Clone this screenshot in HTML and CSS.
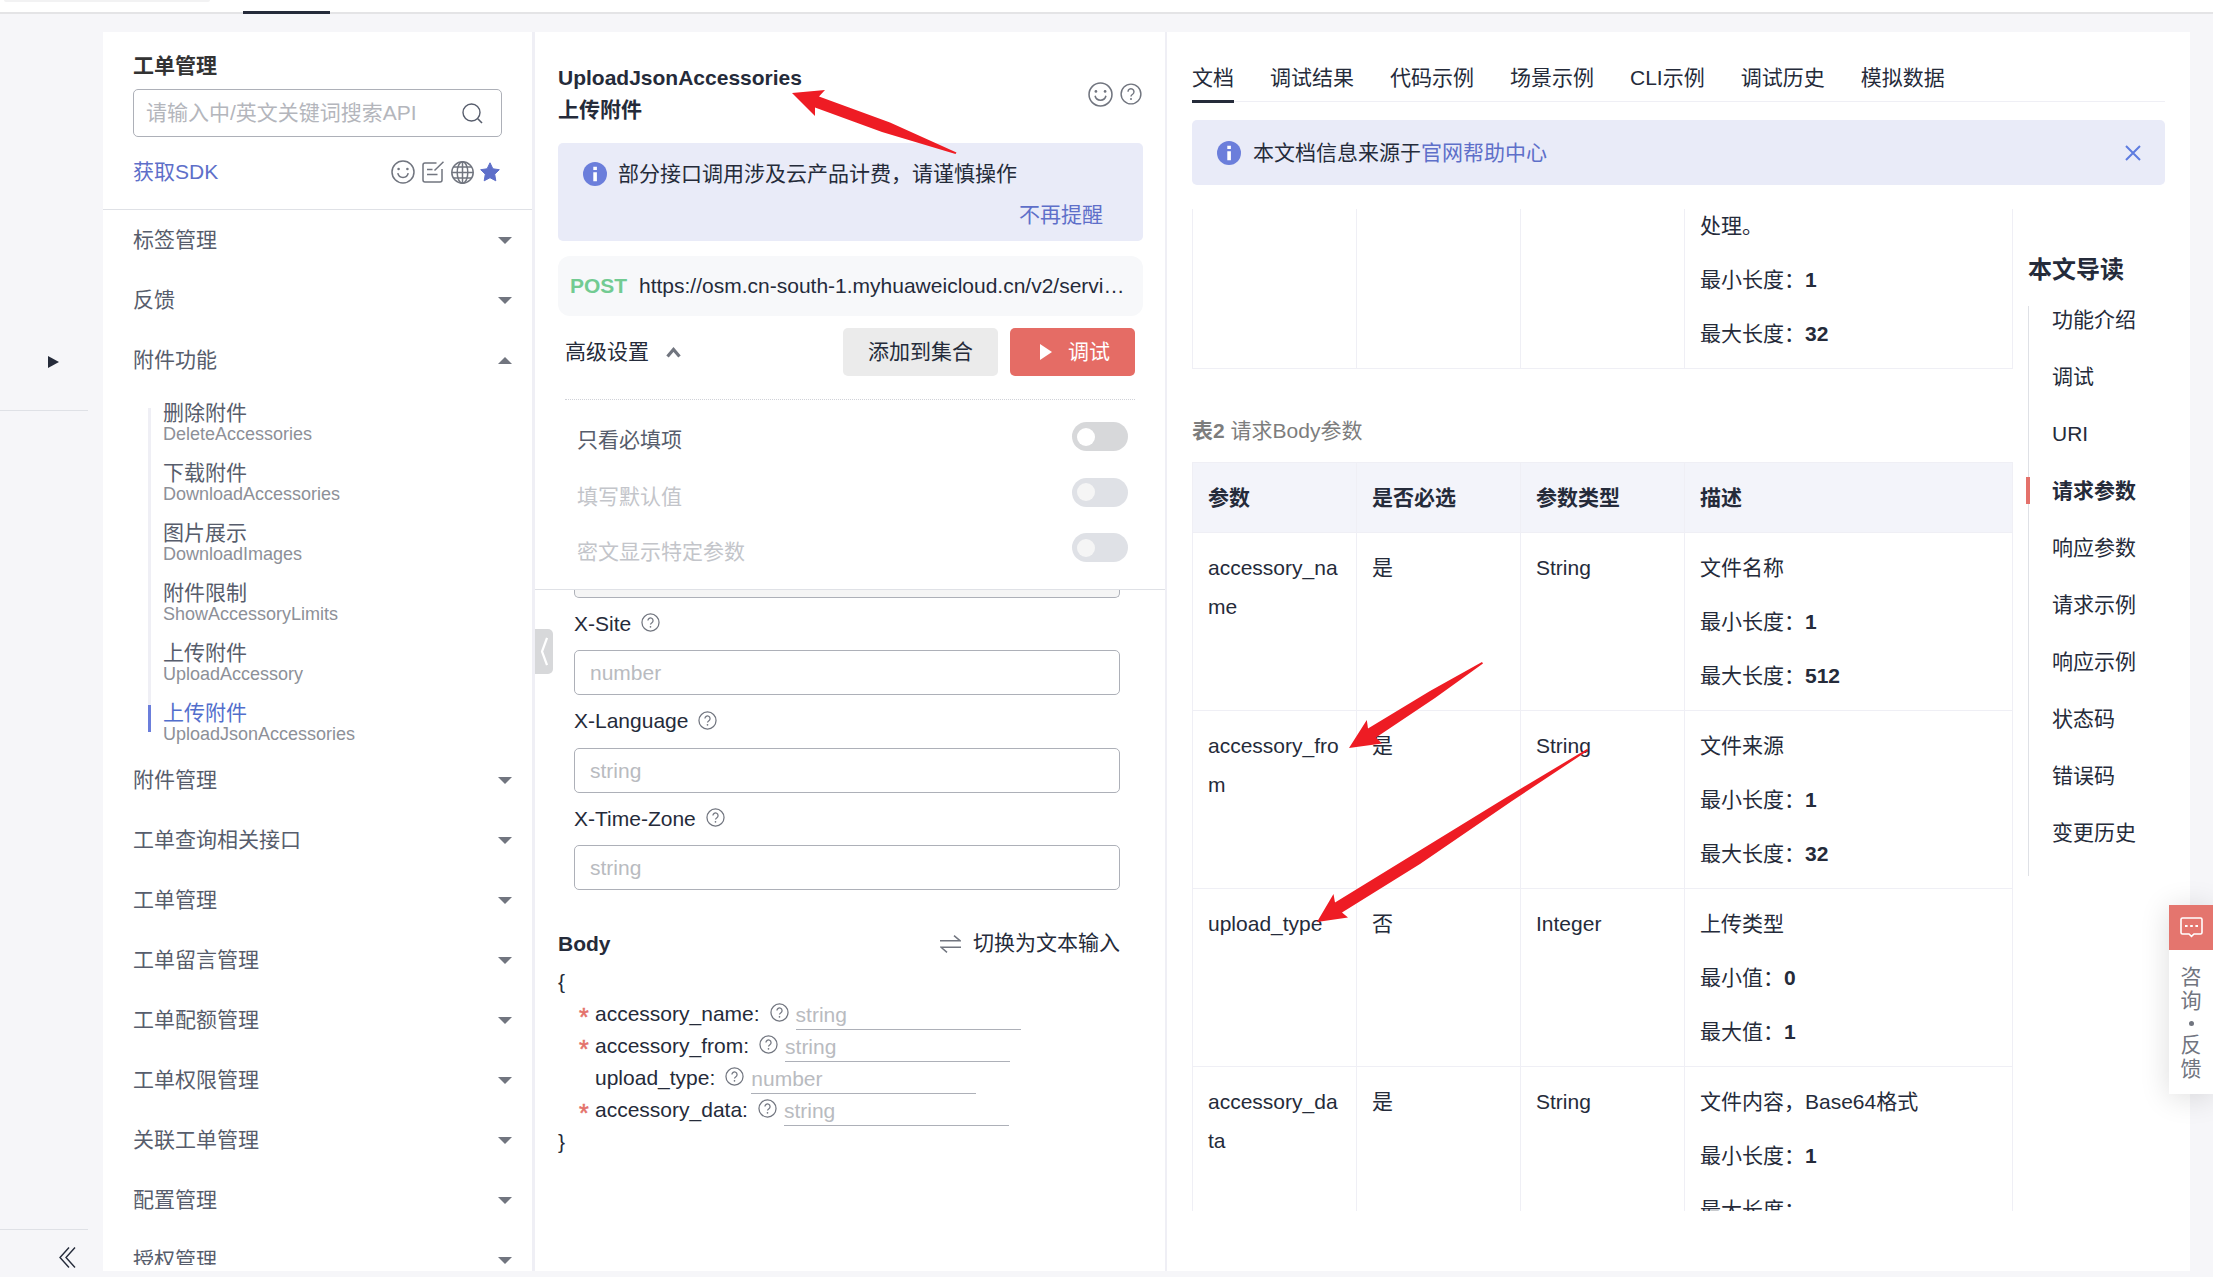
FILE: index.html
```html
<!DOCTYPE html>
<html lang="zh-CN">
<head>
    <meta charset="UTF-8">
    <title>API Explorer - UploadJsonAccessories</title>
    <link rel="stylesheet" href="styles.css">
</head>
<body>
    <svg class="sprite" width="0" height="0">
        <symbol id="help" viewBox="0 0 20 20">
            <circle cx="10" cy="10" r="9" fill="none" stroke="currentColor" stroke-width="1.3"/>
            <path d="M7.3 8 a2.7 2.7 0 1 1 4.2 2.2 q-1.5 1 -1.5 2" fill="none" stroke="currentColor" stroke-width="1.3"/>
            <circle cx="10" cy="14.6" r="0.9" fill="currentColor"/>
        </symbol>
        <symbol id="smile" viewBox="0 0 24 24">
            <circle cx="12" cy="12" r="11" fill="none" stroke="currentColor" stroke-width="1.5"/>
            <circle cx="7.6" cy="9" r="1.3" fill="currentColor"/>
            <circle cx="16.4" cy="9" r="1.3" fill="currentColor"/>
            <path d="M6.8 13.2 a5.3 5.3 0 0 0 10.4 0" fill="none" stroke="currentColor" stroke-width="1.5"/>
        </symbol>
        <symbol id="info" viewBox="0 0 24 24">
            <circle cx="12" cy="12" r="12" fill="#6b7edb"/>
            <path d="M10.3 4.8h3.6v3.2h-3.6z M10.3 10.2h3.6v9h-3.6z" fill="#fff"/>
        </symbol>
    </svg>

    <header class="topbar">
        <div class="top-search"></div>
        <div class="top-active"></div>
    </header>

    <div class="page">
        <aside class="rail">
            <div class="rail-top"><i class="rail-arrow"></i></div>
            <div class="rail-bottom">
                <svg width="17" height="21" viewBox="0 0 17 21"><path d="M10 .5 L1 10.5 L10 20.5 M16 .5 L7 10.5 L16 20.5" fill="none" stroke="#252b3a" stroke-width="1.4"/></svg>
            </div>
        </aside>

        <nav class="sidebar">
            <div class="sidebar-head">
                <h2>工单管理</h2>
                <div class="search">
                    <span>请输入中/英文关键词搜索API</span>
                    <svg width="21" height="21" viewBox="0 0 21 21"><circle cx="9.5" cy="9.5" r="8.5" fill="none" stroke="#575d6c" stroke-width="1.4"/><path d="M15.8 15.8 L20 20" stroke="#575d6c" stroke-width="1.6"/></svg>
                </div>
                <div class="sdk">
                    <a>获取SDK</a>
                    <div class="sdk-icons">
                        <svg width="24" height="24"><use href="#smile"/></svg>
                        <svg width="22" height="22" viewBox="0 0 22 22" fill="none" stroke="currentColor" stroke-width="1.5"><path d="M14.5 2 H3 a2 2 0 0 0 -2 2 V19 a2 2 0 0 0 2 2 H18 a2 2 0 0 0 2 -2 V8"/><path d="M5 8.5 H10.5 M5 13.5 H15.5 M12.5 9.5 L21.5 .8"/></svg>
                        <svg width="23" height="23" viewBox="0 0 23 23" fill="none" stroke="currentColor" stroke-width="1.5"><circle cx="11.5" cy="11.5" r="10.7"/><ellipse cx="11.5" cy="11.5" rx="5.3" ry="10.7"/><path d="M11.5 .8 V22.2 M.8 11.5 H22.2 M2.5 6 H20.5 M2.5 17 H20.5"/></svg>
                        <svg width="20" height="20" viewBox="0 0 20 20"><path d="M10 .8 L12.9 6.8 L19.3 7.7 L14.7 12.2 L15.8 18.8 L10 15.7 L4.2 18.8 L5.3 12.2 L.7 7.7 L7.1 6.8 Z" fill="#5e6fc9" stroke="#5e6fc9" stroke-width="1" stroke-linejoin="round"/></svg>
                    </div>
                </div>
            </div>
            <div class="menu">
                <div class="group">标签管理<i class="caret"></i></div>
                <div class="group">反馈<i class="caret"></i></div>
                <div class="group">附件功能<i class="caret up"></i></div>
                <ul class="apis">
                    <li>删除附件<small>DeleteAccessories</small></li>
                    <li>下载附件<small>DownloadAccessories</small></li>
                    <li>图片展示<small>DownloadImages</small></li>
                    <li>附件限制<small>ShowAccessoryLimits</small></li>
                    <li>上传附件<small>UploadAccessory</small></li>
                    <li class="active">上传附件<small>UploadJsonAccessories</small></li>
                </ul>
                <div class="group">附件管理<i class="caret"></i></div>
                <div class="group">工单查询相关接口<i class="caret"></i></div>
                <div class="group">工单管理<i class="caret"></i></div>
                <div class="group">工单留言管理<i class="caret"></i></div>
                <div class="group">工单配额管理<i class="caret"></i></div>
                <div class="group">工单权限管理<i class="caret"></i></div>
                <div class="group">关联工单管理<i class="caret"></i></div>
                <div class="group">配置管理<i class="caret"></i></div>
                <div class="group">授权管理<i class="caret"></i></div>
            </div>
        </nav>

        <section class="debug">
            <div class="debug-head">
                <div class="title">
                    <h1>UploadJsonAccessories<br>上传附件</h1>
                    <div class="title-icons">
                        <svg width="25" height="25"><use href="#smile"/></svg>
                        <svg width="22" height="22"><use href="#help"/></svg>
                    </div>
                </div>
                <div class="notice">
                    <svg width="24" height="24"><use href="#info"/></svg>
                    <div class="notice-text">
                        <p>部分接口调用涉及云产品计费，请谨慎操作</p>
                        <a>不再提醒</a>
                    </div>
                </div>
                <div class="url"><b>POST</b><span>https://osm.cn-south-1.myhuaweicloud.cn/v2/servi…</span></div>
                <div class="actions">
                    <span class="advanced">高级设置</span>
                    <svg class="chevron" width="15" height="11" viewBox="0 0 15 11"><path d="M1.5 9.5 L7.5 2.5 L13.5 9.5" fill="none" stroke="#71757f" stroke-width="3.2"/></svg>
                    <button class="btn">添加到集合</button>
                    <button class="btn primary"><i class="play"></i>调试</button>
                </div>
                <div class="options">
                    <div class="option"><span>只看必填项</span><i class="toggle"></i></div>
                    <div class="option disabled"><span>填写默认值</span><i class="toggle"></i></div>
                    <div class="option disabled"><span>密文显示特定参数</span><i class="toggle"></i></div>
                </div>
            </div>
            <div class="debug-form">
                <div class="input cut"></div>
                <div class="field">
                    <label>X-Site<svg width="19" height="19"><use href="#help"/></svg></label>
                    <div class="input">number</div>
                </div>
                <div class="field">
                    <label>X-Language<svg width="19" height="19"><use href="#help"/></svg></label>
                    <div class="input">string</div>
                </div>
                <div class="field">
                    <label>X-Time-Zone<svg width="19" height="19"><use href="#help"/></svg></label>
                    <div class="input">string</div>
                </div>
                <div class="body-head">
                    <b>Body</b>
                    <svg width="21" height="18" viewBox="0 0 21 18" fill="none" stroke="#71757f" stroke-width="1.5"><path d="M0 5.7 H20 L14 .6 M21 12.2 H1 L7 17.4"/></svg>
                    <span>切换为文本输入</span>
                </div>
                <div class="json">
                    <div class="row">{</div>
                    <div class="row param"><em>*</em>accessory_name:<svg width="19" height="19"><use href="#help"/></svg><span>string</span></div>
                    <div class="row param"><em>*</em>accessory_from:<svg width="19" height="19"><use href="#help"/></svg><span>string</span></div>
                    <div class="row param"><em></em>upload_type:<svg width="19" height="19"><use href="#help"/></svg><span>number</span></div>
                    <div class="row param"><em>*</em>accessory_data:<svg width="19" height="19"><use href="#help"/></svg><span>string</span></div>
                    <div class="row">}</div>
                </div>
            </div>
            <div class="handle"><svg width="8" height="29" viewBox="0 0 8 29"><path d="M7 1 L2 14.5 L7 28" fill="none" stroke="#fff" stroke-width="2.2"/></svg></div>
        </section>

        <section class="doc">
            <div class="tabs">
                <span class="active">文档</span>
                <span>调试结果</span>
                <span>代码示例</span>
                <span>场景示例</span>
                <span>CLI示例</span>
                <span>调试历史</span>
                <span>模拟数据</span>
            </div>
            <div class="source">
                <svg width="24" height="24"><use href="#info"/></svg>
                <p>本文档信息来源于<a>官网帮助中心</a></p>
                <svg width="16" height="16" viewBox="0 0 16 16"><path d="M1 1 L15 15 M15 1 L1 15" stroke="#5e7ce0" stroke-width="2"/></svg>
            </div>
            <div class="doc-body">
                <div class="article">
                    <table class="first">
                        <tr>
                            <td></td><td></td><td></td>
                            <td><p>处理。</p><p>最小长度：<b>1</b></p><p>最大长度：<b>32</b></p></td>
                        </tr>
                    </table>
                    <div class="caption"><b>表2</b> 请求Body参数</div>
                    <table>
                        <tr><th>参数</th><th>是否必选</th><th>参数类型</th><th>描述</th></tr>
                        <tr>
                            <td>accessory_name</td><td>是</td><td>String</td>
                            <td><p>文件名称</p><p>最小长度：<b>1</b></p><p>最大长度：<b>512</b></p></td>
                        </tr>
                        <tr>
                            <td>accessory_from</td><td>是</td><td>String</td>
                            <td><p>文件来源</p><p>最小长度：<b>1</b></p><p>最大长度：<b>32</b></p></td>
                        </tr>
                        <tr>
                            <td>upload_type</td><td>否</td><td>Integer</td>
                            <td><p>上传类型</p><p>最小值：<b>0</b></p><p>最大值：<b>1</b></p></td>
                        </tr>
                        <tr>
                            <td>accessory_data</td><td>是</td><td>String</td>
                            <td><p>文件内容，Base64格式</p><p>最小长度：<b>1</b></p><p>最大长度：</p></td>
                        </tr>
                    </table>
                </div>
                <div class="toc">
                    <h3>本文导读</h3>
                    <ul>
                        <li>功能介绍</li>
                        <li>调试</li>
                        <li>URI</li>
                        <li class="active">请求参数</li>
                        <li>响应参数</li>
                        <li>请求示例</li>
                        <li>响应示例</li>
                        <li>状态码</li>
                        <li>错误码</li>
                        <li>变更历史</li>
                    </ul>
                </div>
            </div>
        </section>
    </div>

    <div class="feedback">
        <div class="feedback-icon">
            <svg width="23" height="21" viewBox="0 0 23 21"><path d="M2.5 1 H20.5 a1.5 1.5 0 0 1 1.5 1.5 V15.5 a1.5 1.5 0 0 1 -1.5 1.5 H14 L11.5 19.3 L9 17 H2.5 A1.5 1.5 0 0 1 1 15.5 V2.5 A1.5 1.5 0 0 1 2.5 1 Z" fill="none" stroke="#fff" stroke-width="1.6"/><path d="M5 8h2.6v2H5z M10.2 8h2.6v2h-2.6z M15.4 8H18v2h-2.6z" fill="#fff"/></svg>
        </div>
        <div class="feedback-text"><span>咨</span><span>询</span><i></i><span>反</span><span>馈</span></div>
    </div>

    <!-- annotation arrows -->
    <svg class="arrows" width="2213" height="1277" viewBox="0 0 2213 1277" fill="#ee1c24">
        <path d="M792 93 L825 90 L819 96.5 L890 122.5 L956.5 152.5 L955.5 154 L882 132 L815 107.5 L815 116 Z"/>
        <path d="M1349 748 L1366.8 720 L1368 728.5 L1430 691 L1482 662 L1483 663.5 L1435 698 L1376 737.5 L1382 743.5 Z"/>
        <path d="M1317 922 L1333.5 894 L1335 902.5 L1502 800 L1587 749 L1588 750.5 L1512 801 L1420 864 L1342 912.5 L1348 917.5 Z"/>
    </svg>
</body>
</html>
```
FILE: styles.css
```css
* {
    box-sizing: border-box;
}

body {
    margin: 0;
    height: 1277px;
    overflow: hidden;
    background: #f6f6f9;
    color: #252b3a;
    font-family: "Liberation Sans", "Noto Sans CJK SC", sans-serif;
    font-size: 21px;
    line-height: 32px;
}

h1, h2, h3, p, ul {
    margin: 0;
    padding: 0;
}

h1, h2 {
    font-size: 21px;
}

li {
    list-style: none;
}

svg {
    flex: none;
}

.sprite {
    display: none;
}

/* top bar */
.topbar {
    display: flex;
    align-items: flex-start;
    height: 14px;
    background: #fff;
    border-bottom: 2px solid #e4e4e6;
}

.top-search {
    width: 206px;
    height: 2px;
    margin-left: 4px;
    background: #f2f2f3;
    border-radius: 0 0 4px 4px;
}

.top-active {
    width: 87px;
    height: 3px;
    margin: 11px 0 0 33px;
    background: #252b3a;
}

.page {
    display: flex;
    height: 1239px;
    margin-top: 18px;
}

/* left rail */
.rail {
    display: flex;
    flex-direction: column;
    justify-content: space-between;
    width: 103px;
    padding-right: 15px;
}

.rail-top {
    height: 379px;
    padding: 324px 0 0 48px;
    border-bottom: 1px solid #dfe1e6;
}

.rail-arrow {
    display: block;
    width: 0;
    border-left: 11px solid #252b3a;
    border-top: 6.5px solid transparent;
    border-bottom: 6.5px solid transparent;
}

.rail-bottom {
    height: 42px;
    padding: 17px 0 0 59px;
    border-top: 1px solid #dfe1e6;
    line-height: 0;
}

/* api list */
.sidebar {
    width: 429px;
    background: #fff;
}

.sidebar-head {
    height: 178px;
    padding: 18px 30px 0;
    border-bottom: 1px solid #dfe1e6;
}

.sidebar h2 {
    color: #333;
}

.search {
    display: flex;
    align-items: center;
    justify-content: space-between;
    height: 48px;
    margin-top: 7px;
    padding: 0 18px 0 12px;
    border: 1px solid #adb0b8;
    border-radius: 5px;
    color: #b4b6bc;
}

.sdk {
    display: flex;
    align-items: center;
    justify-content: space-between;
    height: 40px;
    margin-top: 15px;
    color: #5e6fc9;
}

.sdk-icons {
    display: flex;
    align-items: center;
    gap: 7px;
    padding-right: 2px;
    color: #71757f;
}

.sdk-icons svg:last-child {
    margin-left: -1px;
}

.menu {
    height: 1055px;
    overflow: hidden;
    color: #575d6c;
}

.group {
    display: flex;
    align-items: center;
    justify-content: space-between;
    height: 60px;
    padding: 0 20px 0 30px;
}

.caret {
    border: 7px solid transparent;
    border-top-color: #71757f;
    border-bottom-width: 0;
}

.caret.up {
    border-width: 0 7px 7px;
    border-bottom-color: #71757f;
}

.apis {
    position: relative;
}

.apis::before,
.apis .active::before {
    content: "";
    position: absolute;
    left: 45px;
    top: 18px;
    width: 3px;
    height: 297px;
    background: #efeff5;
}

.apis .active::before {
    top: 315px;
    height: 27px;
    background: #6b7edb;
}

.apis li {
    height: 60px;
    padding: 12px 0 0 60px;
    line-height: 22px;
}

.apis .active {
    color: #526ecc;
}

.apis small {
    display: block;
    font-size: 18px;
    line-height: 20px;
    color: #8d9098;
}

/* debug panel */
.debug {
    position: relative;
    width: 635px;
    background: #fff;
    border-left: 3px solid #efeff5;
    border-right: 2px solid #efeff5;
}

.debug-head {
    height: 558px;
    padding: 30px 22px 0 23px;
    border-bottom: 1px solid #dfe1e6;
}

.title {
    display: flex;
    justify-content: space-between;
    align-items: center;
    height: 64px;
}

.title-icons {
    display: flex;
    align-items: center;
    gap: 7px;
    padding-right: 1px;
    color: #71757f;
}

.notice {
    display: flex;
    height: 98px;
    margin-top: 17px;
    padding: 15px 40px 0 25px;
    background: #e9ebf8;
    border-radius: 5px;
}

.notice svg {
    margin-top: 4px;
}

.notice-text {
    flex: 1;
    display: flex;
    flex-direction: column;
    gap: 9px;
    margin-left: 11px;
}

.notice a {
    align-self: flex-end;
    color: #5e6fc9;
}

.url {
    display: flex;
    align-items: center;
    height: 60px;
    margin-top: 15px;
    padding-left: 12px;
    background: #f7f8fa;
    border-radius: 12px;
}

.url b {
    width: 69px;
    color: #72cb92;
}

.actions {
    display: flex;
    align-items: center;
    height: 48px;
    margin: 12px 8px 0 7px;
}

.chevron {
    margin: 0 auto 0 17px;
}

.btn {
    width: 155px;
    height: 48px;
    padding: 0;
    border: 0;
    border-radius: 5px;
    background: #ebebeb;
    color: #252b3a;
    font: inherit;
}

.btn.primary {
    display: flex;
    align-items: center;
    width: 125px;
    margin-left: 12px;
    padding-left: 30px;
    background: #e56c65;
    color: #fff;
}

.play {
    margin-right: 16px;
    border-left: 12px solid #fff;
    border-top: 8px solid transparent;
    border-bottom: 8px solid transparent;
}

.options {
    margin: 23px 8px 0 7px;
    padding: 9px 7px 0 12px;
    border-top: 1px dotted #d0d2d8;
}

.option {
    display: flex;
    align-items: center;
    justify-content: space-between;
    height: 55.5px;
    color: #575d6c;
}

.option span {
    padding-top: 7px;
}

.option.disabled {
    color: #c3c5ca;
}

.option.disabled span {
    padding-top: 9px;
}

.toggle {
    width: 56px;
    height: 29px;
    padding: 5.5px 5px;
    background: #d7d8da;
    border-radius: 15px;
}

.toggle::before {
    content: "";
    display: block;
    width: 18px;
    height: 18px;
    background: #fff;
    border-radius: 50%;
}

.disabled .toggle {
    background: #dfe1e6;
}

.disabled .toggle::before {
    background: #f5f5f5;
}

.debug-form {
    padding: 0 45px 0 23px;
}

.input {
    height: 45px;
    margin-top: 10px;
    padding-left: 15px;
    border: 1px solid #adb0b8;
    border-radius: 5px;
    line-height: 43px;
    color: #b9bbc0;
}

.input.cut {
    height: 8px;
    margin: 0 0 9px 16px;
    border-top: 0;
    border-radius: 0 0 5px 5px;
    background: #f5f5f5;
}

.field {
    height: 97.5px;
    margin-left: 16px;
}

.field label {
    display: flex;
    align-items: center;
    gap: 10px;
    height: 33px;
}

.field .input {
    margin-top: 10px;
}

.field label svg,
.param svg {
    color: #71757f;
}

.field label svg {
    margin-top: -2px;
}

.body-head {
    display: flex;
    align-items: center;
    margin: 28px 0 6px;
}

.body-head svg {
    margin: 0 12px 0 auto;
}

.body-head span {
    margin-top: -2px;
}

.row {
    height: 32px;
}

.param {
    display: flex;
    padding-left: 21px;
}

.param em {
    width: 16px;
    padding-top: 3px;
    font-style: normal;
    font-size: 25px;
    -webkit-text-stroke: 0.5px #e4716b;
    color: #e4716b;
}

.param svg {
    margin: 5px 7px 0 10px;
}

.param span {
    width: 225px;
    height: 32px;
    line-height: 34px;
    border-bottom: 1px solid #adb0b8;
    color: #b9bbc0;
}

.handle {
    position: absolute;
    left: 0;
    top: 597px;
    width: 18px;
    height: 45px;
    padding: 8px 0 0 5px;
    background: #d7d8da;
    border-radius: 0 5px 5px 0;
    line-height: 0;
}

/* document panel */
.doc {
    width: 1023px;
    padding: 30px 25px 0;
    background: #fff;
}

.tabs {
    display: flex;
    gap: 36px;
    height: 40px;
    border-bottom: 1px solid #efeff5;
}

.tabs .active {
    height: 41px;
    border-bottom: 3px solid #252b3a;
}

.source {
    display: flex;
    align-items: center;
    height: 65px;
    margin-top: 18px;
    padding: 0 24px 0 25px;
    background: #e9ebf8;
    border-radius: 5px;
}

.source p {
    flex: 1;
    margin-left: 12px;
}

.source a {
    color: #5e6fc9;
}

.doc-body {
    display: flex;
    height: 1002px;
    margin-top: 24px;
    overflow: hidden;
}

.article {
    width: 821px;
    flex: none;
}

table {
    width: 821px;
    table-layout: fixed;
    border-collapse: collapse;
}

table.first {
    margin-top: -19px;
}

th, td {
    width: 164px;
    padding: 15px 15px 0;
    border: 1px solid #efeff5;
    text-align: left;
    vertical-align: top;
    line-height: 39px;
    word-break: break-all;
}

th:last-child, td:last-child {
    width: auto;
}

th {
    padding-bottom: 15px;
    background: #f3f4fa;
}

td p {
    margin-bottom: 15px;
}

.caption {
    margin: 46px 0 15px;
    color: #7d7d7d;
}

.toc {
    margin-left: 15px;
    padding-top: 45px;
}

.toc h3 {
    font-size: 24px;
    margin-bottom: 20px;
}

.toc ul {
    height: 570px;
    border-left: 1px solid #dfe1e6;
}

.toc li {
    height: 57px;
    padding-left: 23px;
    line-height: 28px;
}

.toc .active {
    position: relative;
    font-weight: bold;
}

.toc .active::before {
    content: "";
    position: absolute;
    left: -3px;
    top: 0;
    width: 4px;
    height: 27px;
    background: #e4716b;
}

/* floating feedback button */
.feedback {
    position: absolute;
    left: 2169px;
    top: 905px;
    width: 44px;
    height: 189px;
    background: #fff;
    box-shadow: 0 3px 30px rgba(0, 0, 0, 0.14);
    color: #71757f;
}

.feedback-icon {
    height: 45px;
    padding: 12px 0 0 11px;
    background: #e4756e;
    line-height: 0;
}

.feedback-text {
    display: flex;
    flex-direction: column;
    align-items: center;
    padding-top: 15px;
    line-height: 24px;
}

.feedback-text i {
    width: 5px;
    height: 5px;
    margin: 8px 0 7px;
    background: #71757f;
    border-radius: 50%;
}

.arrows {
    position: absolute;
    left: 0;
    top: 0;
}
```
